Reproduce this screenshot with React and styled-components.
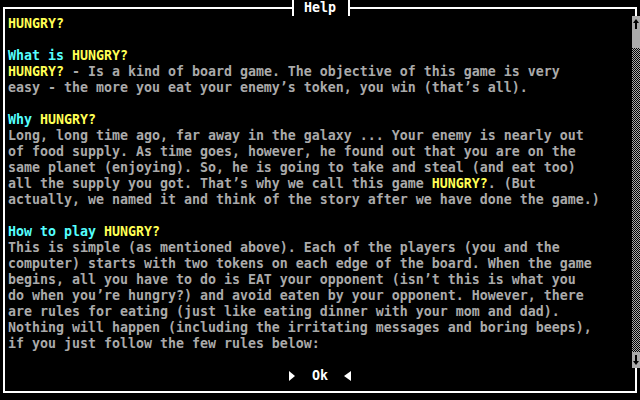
import styled, { createGlobalStyle } from "styled-components";

const GlobalStyle = createGlobalStyle`
  html, body {
    margin: 0;
    padding: 0;
    background: #000;
  }
  body {
    width: 640px;
    height: 400px;
    overflow: hidden;
  }
`;

const lines = [
  [{ t: "HUNGRY?", c: "hi" }],
  [],
  [{ t: "What is ", c: "head" }, { t: "HUNGRY?", c: "hi" }],
  [
    { t: "HUNGRY?", c: "hi" },
    { t: " - Is a kind of board game. The objective of this game is very" },
  ],
  [{ t: "easy - the more you eat your enemy’s token, you win (that’s all)." }],
  [],
  [{ t: "Why ", c: "head" }, { t: "HUNGRY?", c: "hi" }],
  [{ t: "Long, long time ago, far away in the galaxy ... Your enemy is nearly out" }],
  [{ t: "of food supply. As time goes, however, he found out that you are on the" }],
  [{ t: "same planet (enjoying). So, he is going to take and steal (and eat too)" }],
  [
    { t: "all the supply you got. That’s why we call this game " },
    { t: "HUNGRY?", c: "hi" },
    { t: ". (But" },
  ],
  [{ t: "actually, we named it and think of the story after we have done the game.)" }],
  [],
  [{ t: "How to play ", c: "head" }, { t: "HUNGRY?", c: "hi" }],
  [{ t: "This is simple (as mentioned above). Each of the players (you and the" }],
  [{ t: "computer) starts with two tokens on each edge of the board. When the game" }],
  [{ t: "begins, all you have to do is EAT your opponent (isn’t this is what you" }],
  [{ t: "do when you’re hungry?) and avoid eaten by your opponent. However, there" }],
  [{ t: "are rules for eating (just like eating dinner with your mom and dad)." }],
  [{ t: "Nothing will happen (including the irritating messages and boring beeps)," }],
  [{ t: "if you just follow the few rules below:" }],
];

const colors = { hi: "#ffff55", head: "#55ffff" };

const Pointer = ({ dir }) => (
  <svg width="8" height="16" viewBox="0 0 8 16">
    {dir === "right" ? (
      <polygon points="1,3 7,8 1,13" fill="#fff" />
    ) : (
      <polygon points="7,3 0,8 7,13" fill="#fff" />
    )}
  </svg>
);

const ArrowIcon = ({ up }) => (
  <svg width="8" height="16" viewBox="0 0 8 16">
    {up ? (
      <g fill="#000">
        <polygon points="4,3 7,7 1,7" />
        <rect x="3" y="6" width="2" height="7" />
      </g>
    ) : (
      <g fill="#000">
        <rect x="3" y="3" width="2" height="7" />
        <polygon points="4,13 7,9 1,9" />
      </g>
    )}
  </svg>
);

const App = () => {
  return (
    <>
      <GlobalStyle />
      <Screen>
        <Frame>
          <TitleRow>
            <Title>Help</Title>
          </TitleRow>
          <Body>
            <TextCol>
              {lines.map((parts, i) => (
                <Line key={i}>
                  {parts.map((p, j) => (
                    <Span key={j} $tone={p.c}>
                      {p.t}
                    </Span>
                  ))}
                </Line>
              ))}
            </TextCol>
            <ScrollBar>
              <ScrollCell>
                <ArrowIcon up />
              </ScrollCell>
              <ScrollCell />
              <Track />
              <ScrollCell>
                <ArrowIcon />
              </ScrollCell>
            </ScrollBar>
          </Body>
          <ButtonRow>
            <Pointer dir="right" />
            <OkLabel>{"  Ok  "}</OkLabel>
            <Pointer dir="left" />
          </ButtonRow>
        </Frame>
      </Screen>
    </>
  );
};

export default App;

const Screen = styled.div`
  width: 640px;
  height: 400px;
  box-sizing: border-box;
  padding: 7px 0 0 3px;
  background: #000;
  font-family: "DejaVu Sans Mono", "Liberation Mono", monospace;
  font-weight: bold;
  font-size: 13.29px;
  line-height: 16px;
`;

const Frame = styled.div`
  width: 634px;
  height: 386px;
  box-sizing: border-box;
  border: 2px solid #fff;
  display: flex;
  flex-direction: column;
`;

const TitleRow = styled.div`
  margin-top: -9px;
  height: 16px;
  flex: none;
  display: flex;
  justify-content: center;
`;

const Title = styled.div`
  width: 58px;
  height: 16px;
  margin-left: 2px;
  box-sizing: border-box;
  padding-left: 10px;
  border-left: 2px solid #fff;
  border-right: 2px solid #fff;
  background: #000;
  color: #fff;
`;

const Body = styled.div`
  height: 352px;
  flex: none;
  display: flex;
`;

const TextCol = styled.div`
  flex: 1;
  padding-left: 3px;
  color: #aaaaaa;
`;

const Line = styled.div`
  height: 16px;
  white-space: pre;
`;

const Span = styled.span`
  color: ${(p) => (p.$tone ? colors[p.$tone] : "inherit")};
`;

const ScrollBar = styled.div`
  width: 8px;
  height: 352px;
  margin-right: -5px;
  flex: none;
  display: flex;
  flex-direction: column;
`;

const ScrollCell = styled.div`
  height: 16px;
  flex: none;
  background: #aaaaaa;
  svg {
    display: block;
  }
`;

const Track = styled.div`
  flex: 1;
  background-color: #000;
  background-image: conic-gradient(
    #aaaaaa 25%,
    transparent 0 50%,
    #aaaaaa 0 75%,
    transparent 0
  );
  background-size: 2px 2px;
`;

const ButtonRow = styled.div`
  height: 16px;
  flex: none;
  display: flex;
  justify-content: center;
  align-items: center;
  color: #fff;
  svg {
    display: block;
  }
`;

const OkLabel = styled.span`
  white-space: pre;
`;
